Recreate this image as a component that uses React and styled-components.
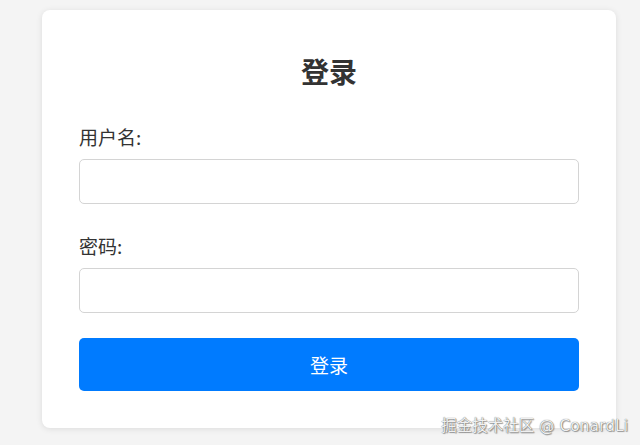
import React from "react"
import styled, { createGlobalStyle } from "styled-components"

const GlobalStyle = createGlobalStyle`
  html, body {
    margin: 0;
    padding: 0;
    background: #f4f4f4;
    font-family: "Noto Sans CJK SC", "Liberation Sans", sans-serif;
  }
  * {
    box-sizing: border-box;
  }
`

const Page = styled.div`
  position: relative;
  width: 640px;
  height: 445px;
  padding: 10px 0 0 42px;
  overflow: hidden;
`

const Card = styled.form`
  width: 574px;
  background: #fff;
  border-radius: 8px;
  box-shadow: 0 1px 6px rgba(0, 0, 0, 0.1);
  padding: 44px 37px 37px;
  display: flex;
  flex-direction: column;
`

const Title = styled.h2`
  margin: 0 0 37px;
  font-size: 28px;
  line-height: 34px;
  font-weight: 700;
  color: #333;
  text-align: center;
`

const Field = styled.div`
  display: flex;
  flex-direction: column;
  margin-bottom: ${(p) => (p.$last ? "25px" : "30px")};
`

const Label = styled.label`
  font-size: 19px;
  line-height: 23px;
  color: #333;
  margin-bottom: 11px;
`

const Input = styled.input`
  height: 45px;
  width: 100%;
  border: 1px solid #d4d4d4;
  border-radius: 5px;
  padding: 0 12px;
  font-size: 17px;
  outline: none;
  background: #fff;
`

const Button = styled.button`
  height: 53px;
  border: none;
  border-radius: 5px;
  background: #007bff;
  color: #fff;
  font-family: inherit;
  font-size: 19px;
  cursor: pointer;
`

const Watermark = styled.div`
  position: absolute;
  right: 12px;
  bottom: 9px;
  font-family: "DejaVu Sans", "Noto Sans CJK SC", sans-serif;
  font-size: 15.5px;
  line-height: 20px;
  color: #f0f0f0;
  text-shadow: 0 0 1px rgba(0, 0, 0, 0.7), 1px 1px 1px rgba(0, 0, 0, 0.35);
  white-space: nowrap;
`

const App = () => {
  return (
    <Page>
      <GlobalStyle />
      <Card onSubmit={(e) => e.preventDefault()}>
        <Title>登录</Title>
        <Field>
          <Label htmlFor="username">用户名:</Label>
          <Input id="username" type="text" />
        </Field>
        <Field $last>
          <Label htmlFor="password">密码:</Label>
          <Input id="password" type="password" />
        </Field>
        <Button type="submit">登录</Button>
      </Card>
      <Watermark>掘金技术社区 @ ConardLi</Watermark>
    </Page>
  )
}

export default App
